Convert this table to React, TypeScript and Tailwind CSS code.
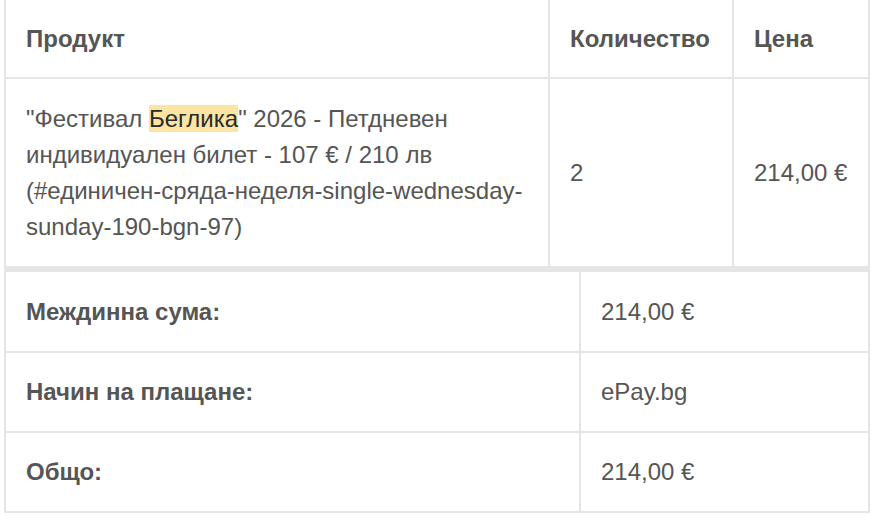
const line = "border-[#e5e5e5]";

export default function App() {
  return (
    <div className="min-h-screen bg-white font-['Liberation_Sans',Arial,sans-serif] text-[24px] leading-[36px] text-[#555]">
      <div className={`ml-1 w-[866px] border-x-2 ${line}`}>
        {/* products */}
        <div className={`grid grid-cols-[542px_184px_136px] border-b-2 ${line} font-bold`}>
          <div className="flex h-[77px] items-center px-5">Продукт</div>
          <div className={`flex h-[77px] items-center whitespace-nowrap border-l-2 px-5 ${line}`}>Количество</div>
          <div className={`flex h-[77px] items-center whitespace-nowrap border-l-2 px-5 ${line}`}>Цена</div>
        </div>
        <div className={`grid grid-cols-[542px_184px_136px] border-b-[6px] ${line}`}>
          <div className="flex h-[187px] items-center px-5">
            <p>
              "Фестивал <mark className="bg-[#fce5a3] text-[#2a2a2a]">Беглика</mark>" 2026 - Петдневен
              индивидуален билет - 107 € / 210 лв (#единичен-сряда-неделя-single-wednesday-sunday-190-bgn-97)
            </p>
          </div>
          <div className={`flex items-center border-l-2 px-5 ${line}`}>2</div>
          <div className={`flex items-center whitespace-nowrap border-l-2 px-5 ${line}`}>214,00 €</div>
        </div>

        {/* totals */}
        {[
          ["Междинна сума:", "214,00 €", "h-[79px]"],
          ["Начин на плащане:", "ePay.bg", "h-[78px]"],
          ["Общо:", "214,00 €", "h-[78px]"],
        ].map(([label, value, h]) => (
          <div key={label} className={`grid grid-cols-[573px_289px] border-b-2 ${line}`}>
            <div className={`flex ${h} items-center px-5 font-bold`}>{label}</div>
            <div className={`flex items-center border-l-2 px-5 ${line}`}>{value}</div>
          </div>
        ))}
      </div>
    </div>
  );
}
